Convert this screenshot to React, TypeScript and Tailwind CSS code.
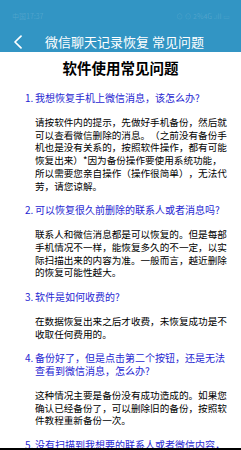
import React from "react";

const items: { n: string; q: string; a: string }[] = [
  {
    n: "1.",
    q: "我想恢复手机上微信消息，该怎么办?",
    a: "请按软件内的提示，先做好手机备份，然后就可以查看微信删除的消息。（之前没有备份手机也是没有关系的，按照软件操作，都有可能恢复出来）*因为备份操作要使用系统功能，所以需要您亲自操作（操作很简单），无法代劳，请您谅解。",
  },
  {
    n: "2.",
    q: "可以恢复很久前删除的联系人或者消息吗?",
    a: "联系人和微信消息都是可以恢复的。但是每部手机情况不一样，能恢复多久的不一定，以实际扫描出来的内容为准。一般而言，越近删除的恢复可能性越大。",
  },
  {
    n: "3.",
    q: "软件是如何收费的?",
    a: "在数据恢复出来之后才收费，未恢复成功是不收取任何费用的。",
  },
  {
    n: "4.",
    q: "备份好了，但是点击第二个按钮，还是无法查看到微信消息，怎么办?",
    a: "这种情况主要是备份没有成功造成的。如果您确认已经备份了，可以删除旧的备份，按照软件教程重新备份一次。",
  },
  {
    n: "5.",
    q: "没有扫描到我想要的联系人或者微信内容，怎么办?",
    a: "",
  },
];

export default function App() {
  return (
    <div className="w-[241px] h-[450px] overflow-hidden flex flex-col bg-white font-['Noto_Sans_CJK_SC','Noto_Sans',sans-serif] [text-spacing-trim:space-all]">
      <div className="bg-[#3295c4] h-[52px] shrink-0 flex flex-col">
        <div className="h-[31px] flex items-center justify-between pl-[12px] pr-[11px] text-[7px] leading-[8px] text-white/15">
          <span>中国17:37</span>
          <span>⊙ ⊙ 2%4G .ıll ▭</span>
        </div>
        <div className="flex-1 flex items-center">
          <svg width="10" height="14" viewBox="0 0 10 14" className="ml-[13px] shrink-0">
            <path d="M8 1.2 L2 7 L8 12.8" fill="none" stroke="white" strokeWidth="1.7" strokeLinecap="round" strokeLinejoin="round" />
          </svg>
          <span className="ml-[22px] text-[13px] leading-[16px] text-white whitespace-nowrap">微信聊天记录恢复 常见问题</span>
        </div>
      </div>
      <div className="flex-1 overflow-hidden">
        <div className="mt-[6px] text-center text-[14.5px] leading-[20px] font-bold text-black">软件使用常见问题</div>
        <div className="mt-[14px] flex flex-col gap-[12px]">
          {items.map((it) => (
            <div key={it.n} className="pl-[25px]">
              <div className="flex text-[10px] leading-[12.75px] text-[#2727d2]">
                <span className="w-[10px] shrink-0">{it.n}</span>
                <span className="w-[196px]">{it.q}</span>
              </div>
              {it.a && (
                <div className="mt-[11px] ml-[10px] w-[195px] text-[9.6px] leading-[12.75px] text-black">{it.a}</div>
              )}
            </div>
          ))}
        </div>
      </div>
      <div className="h-[2px] bg-black shrink-0" />
    </div>
  );
}
